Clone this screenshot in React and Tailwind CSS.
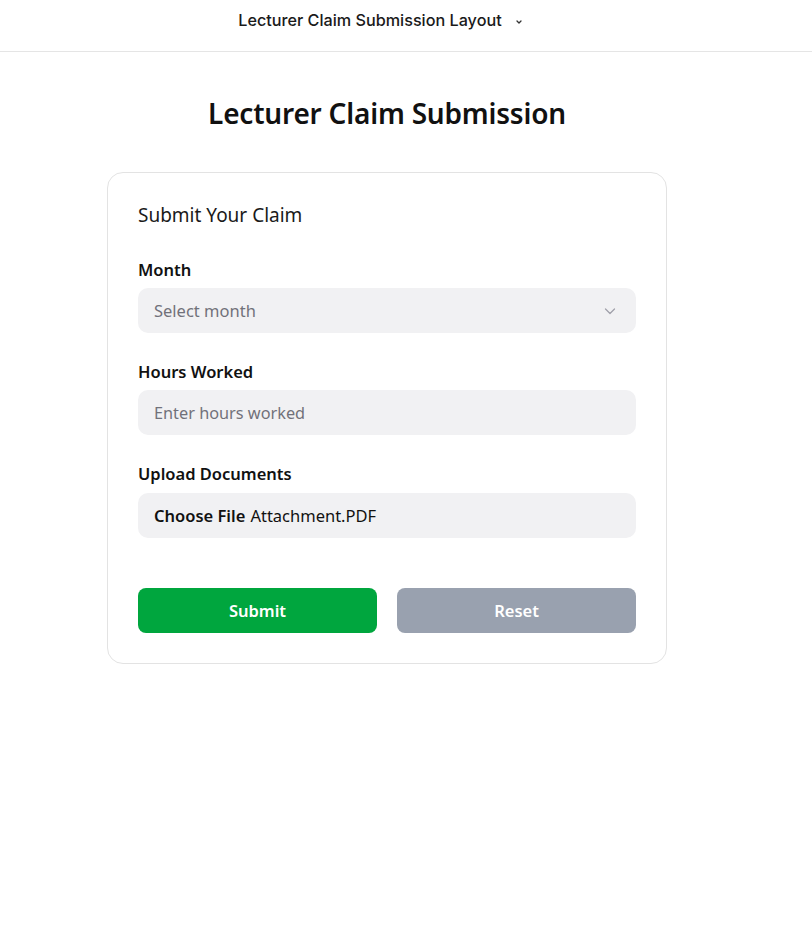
import React from "react";

export default function App() {
  const font = { fontFamily: '"Noto Sans", "Open Sans", sans-serif' };
  return (
    <div className="min-h-[941px] bg-white">
      <header className="h-[52px] border-b border-[#e5e5e5]" style={{ fontFamily: 'Inter, sans-serif' }}>
        <div className="w-[762px] h-full flex items-center justify-center gap-[12px] pb-[10px]">
          <span className="text-[16.2px] font-medium text-[#1a1a1a]">Lecturer Claim Submission Layout</span>
          <svg width="10" height="10" viewBox="0 0 10 10" className="mt-[2px]"><path d="M3 4 L5 6 L7 4" stroke="#333" strokeWidth="1.3" fill="none" strokeLinecap="round" strokeLinejoin="round" /></svg>
        </div>
      </header>
      <main className="w-[774px] flex flex-col items-center" style={font}>
        <h1 className="mt-[41px] text-[28px] font-semibold text-[#111] leading-[40px] tracking-[-0.2px]">Lecturer Claim Submission</h1>
        <div className="mt-[39px] w-[560px] border border-[#e3e3e3] rounded-[16px] px-[30px] pt-[28px] pb-[30px]">
          <h2 className="text-[19px] text-[#1a1a1a] leading-[28px]">Submit Your Claim</h2>
          <div className="mt-[28px]">
            <label className="block text-[16.5px] font-semibold text-[#111] leading-[26px] mb-[5px]">Month</label>
            <div className="h-[45px] rounded-[10px] bg-[#f1f1f3] flex items-center justify-between px-[16px] pt-[2px]">
              <span className="text-[16.5px] text-[#71717a]">Select month</span>
              <svg width="16" height="16" viewBox="0 0 16 16" className="mr-[2px] -mt-[2px]"><path d="M3.5 6 L8 10.5 L12.5 6" stroke="#a1a1aa" strokeWidth="1.3" fill="none" strokeLinecap="round" strokeLinejoin="round" /></svg>
            </div>
          </div>
          <div className="mt-[26px]">
            <label className="block text-[16.5px] font-semibold text-[#111] leading-[26px] mb-[5px]">Hours Worked</label>
            <div className="h-[45px] rounded-[10px] bg-[#f1f1f3] flex items-center px-[16px] pt-[2px]">
              <span className="text-[16.3px] text-[#71717a]">Enter hours worked</span>
            </div>
          </div>
          <div className="mt-[26px]">
            <label className="block text-[16.5px] font-semibold text-[#111] leading-[26px] mb-[6px]">Upload Documents</label>
            <div className="h-[45px] rounded-[10px] bg-[#f1f1f3] flex items-center px-[16px] gap-[5px] pt-[2px]">
              <span className="text-[16.5px] font-semibold text-[#111]">Choose File</span>
              <span className="text-[16.5px] text-[#111]">Attachment.PDF</span>
            </div>
          </div>
          <div className="mt-[50px] grid grid-cols-2 gap-[20px]">
            <button className="h-[45px] rounded-[8px] bg-[#00a63e] text-white text-[16.5px] font-semibold pt-[2px]">Submit</button>
            <button className="h-[45px] rounded-[8px] bg-[#99a1af] text-white text-[16.5px] font-semibold pt-[2px]">Reset</button>
          </div>
        </div>
      </main>
    </div>
  );
}
